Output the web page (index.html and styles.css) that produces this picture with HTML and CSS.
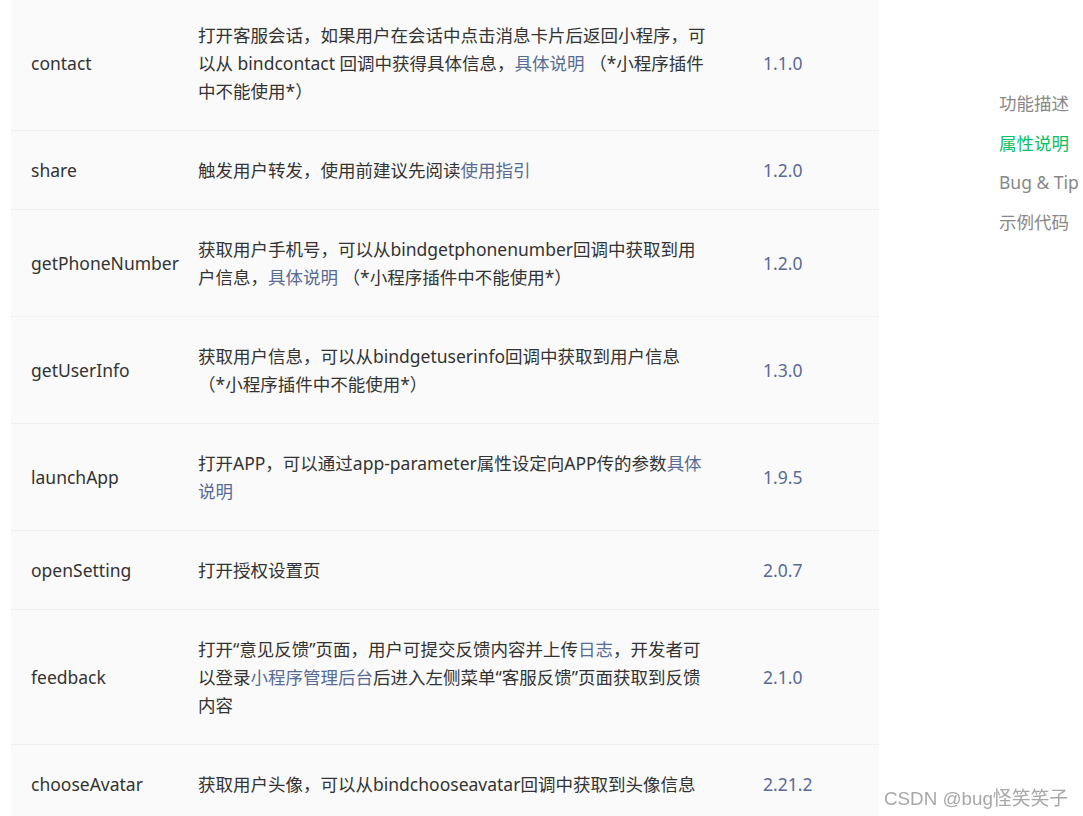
FILE: index.html
```html
<!DOCTYPE html>
<html>
    <head>
        <title>button 属性说明</title>
        <meta charset="UTF-8">
        <link rel="stylesheet" href="styles.css">
    </head>
    <body>
        <div class="pagina">
            <table class="tabela">
                <colgroup>
                    <col class="col-nome">
                    <col class="col-desc">
                    <col class="col-versao">
                </colgroup>
                <tr>
                    <td>contact</td>
                    <td class="desc">打开客服会话，如果用户在会话中点击消息卡片后返回小程序，可以从 bindcontact 回调中获得具体信息，<a href="#">具体说明</a> （*小程序插件中不能使用*）</td>
                    <td class="versao">1.1.0</td>
                </tr>
                <tr>
                    <td>share</td>
                    <td class="desc">触发用户转发，使用前建议先阅读<a href="#">使用指引</a></td>
                    <td class="versao">1.2.0</td>
                </tr>
                <tr>
                    <td>getPhoneNumber</td>
                    <td class="desc">获取用户手机号，可以从bindgetphonenumber回调中获取到用户信息，<a href="#">具体说明</a> （*小程序插件中不能使用*）</td>
                    <td class="versao">1.2.0</td>
                </tr>
                <tr>
                    <td>getUserInfo</td>
                    <td class="desc">获取用户信息，可以从bindgetuserinfo回调中获取到用户信息 （*小程序插件中不能使用*）</td>
                    <td class="versao">1.3.0</td>
                </tr>
                <tr>
                    <td>launchApp</td>
                    <td class="desc">打开APP，可以通过app-parameter属性设定向APP传的参数<a href="#">具体说明</a></td>
                    <td class="versao">1.9.5</td>
                </tr>
                <tr>
                    <td>openSetting</td>
                    <td class="desc">打开授权设置页</td>
                    <td class="versao">2.0.7</td>
                </tr>
                <tr>
                    <td>feedback</td>
                    <td class="desc">打开“意见反馈”页面，用户可提交反馈内容并上传<a href="#">日志</a>，开发者可以登录<a href="#">小程序管理后台</a>后进入左侧菜单“客服反馈”页面获取到反馈内容</td>
                    <td class="versao">2.1.0</td>
                </tr>
                <tr>
                    <td>chooseAvatar</td>
                    <td class="desc">获取用户头像，可以从bindchooseavatar回调中获取到头像信息</td>
                    <td class="versao">2.21.2</td>
                </tr>
            </table>

            <!-- Menu lateral -->
            <ul class="menu">
                <li>功能描述</li>
                <li class="ativo">属性说明</li>
                <li>Bug &amp; Tip</li>
                <li>示例代码</li>
            </ul>
        </div>

        <div class="marca">CSDN @bug怪笑笑子</div>
    </body>
</html>
```

FILE: styles.css
```css
* {
    margin: 0;
    padding: 0;
    box-sizing: border-box;
}
body {
    background-color: #fff;
    font-family: "Noto Sans", "Noto Sans CJK SC", sans-serif;
    font-size: 17.5px;
    color: #333;
    overflow: hidden;
    text-spacing-trim: space-all;
}
.pagina {
    display: flex;
    gap: 120px;
    padding-left: 11px;
    margin-top: -4px;
}
.tabela {
    flex: none;
    width: 868px;
    table-layout: fixed;
    border-collapse: collapse;
    background-color: #fafafa;
}
.col-nome {
    width: 167px;
}
.col-desc {
    width: 565px;
}
.col-versao {
    width: 136px;
}
.tabela td {
    padding: 25px 20px;
    line-height: 28px;
    border-bottom: 1px solid #efefef;
    vertical-align: middle;
    white-space: nowrap;
}
.tabela .desc {
    padding-right: 33px;
    white-space: normal;
    word-break: break-all;
}
.tabela a {
    color: #576b95;
    text-decoration: none;
}
.versao {
    color: #576b95;
}
.menu {
    list-style: none;
    margin-top: 88px;
    white-space: nowrap;
}
.menu li {
    line-height: 39.5px;
    color: #888;
}
.menu .ativo {
    color: #07c160;
}
.marca {
    position: fixed;
    right: 15px;
    bottom: 6px;
    font-family: "Liberation Sans", "Noto Sans CJK SC", sans-serif;
    font-size: 18.8px;
    color: #a8a8a8;
    text-shadow: 0 0 1px #fff;
}
```
